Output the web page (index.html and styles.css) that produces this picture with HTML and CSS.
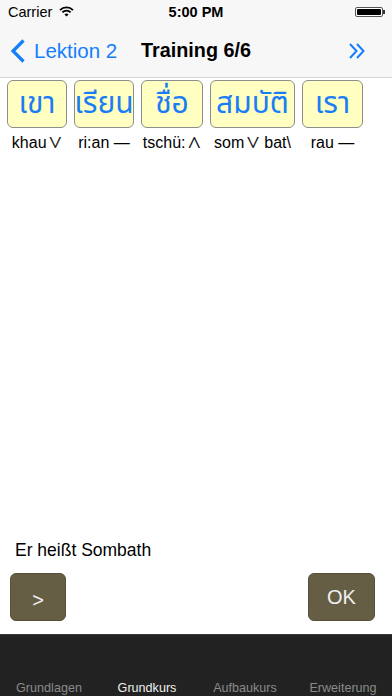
FILE: index.html
```html
<!DOCTYPE html>
<html>
<head>
<meta charset="utf-8">
<link rel="stylesheet" href="styles.css">
</head>
<body>
<div class="screen">
  <div class="statusbar">
    <div class="sb-left">
      <span>Carrier</span>
      <svg class="wifi" width="15" height="11" viewBox="0 0 15 11">
        <path d="M1 4.2 A9 9 0 0 1 14 4.2" fill="none" stroke="#000" stroke-width="1.8"/>
        <path d="M3.4 6.4 A5.6 5.6 0 0 1 11.6 6.4" fill="none" stroke="#000" stroke-width="1.8"/>
        <path d="M7.5 10.5 L5.5 8.4 A2.9 2.9 0 0 1 9.5 8.4 Z" fill="#000"/>
      </svg>
    </div>
    <div class="sb-time">5:00 PM</div>
    <div class="sb-right">
      <div class="battery"><div class="battery-fill"></div></div>
      <div class="battery-tip"></div>
    </div>
  </div>
  <div class="navbar">
    <div class="nav-back">
      <svg width="16" height="24" viewBox="0 0 16 24">
        <path d="M13.5 1.5 L3 12 L13.5 22.5" fill="none" stroke="#147efb" stroke-width="3.2"/>
      </svg>
      <span>Lektion 2</span>
    </div>
    <div class="nav-title">Training 6/6</div>
    <div class="nav-right">
      <svg width="18" height="16" viewBox="0 0 18 16">
        <path d="M2 1 L8.5 8 L2 15" fill="none" stroke="#147efb" stroke-width="2"/>
        <path d="M9 1 L15.5 8 L9 15" fill="none" stroke="#147efb" stroke-width="2"/>
      </svg>
    </div>
  </div>
  <div class="content">
    <div class="words">
      <div class="word"><div class="card w60">เขา</div><div class="trans">khau<span class="tone">∨</span></div></div>
      <div class="word"><div class="card w60">เรียน</div><div class="trans">ri:an —</div></div>
      <div class="word"><div class="card w62">ชื่อ</div><div class="trans">tschü:<span class="tone">∧</span></div></div>
      <div class="word"><div class="card w85">สมบัติ</div><div class="trans">som<span class="tone">∨</span> bat\</div></div>
      <div class="word"><div class="card w61">เรา</div><div class="trans">rau —</div></div>
    </div>
    <div class="spacer"></div>
    <div class="sentence">Er heißt Sombath</div>
    <div class="buttons">
      <div class="btn btn-next">&gt;</div>
      <div class="btn btn-ok">OK</div>
    </div>
  </div>
  <div class="tabbar">
    <span class="tab">Grundlagen</span>
    <span class="tab active">Grundkurs</span>
    <span class="tab">Aufbaukurs</span>
    <span class="tab">Erweiterung</span>
  </div>
</div>
</body>
</html>
```
FILE: styles.css
```css
* { box-sizing: border-box; }
html, body { margin: 0; padding: 0; }
body {
  font-family: "Liberation Sans", Arial, sans-serif;
  background: #fff;
  width: 392px;
  height: 696px;
  overflow: hidden;
}
.screen {
  display: flex;
  flex-direction: column;
  height: 696px;
}
.statusbar {
  height: 24px;
  background: #f7f7f7;
  display: flex;
  align-items: center;
  justify-content: space-between;
  padding: 0 7px 0 8px;
  font-size: 14.5px;
  color: #000;
  position: relative;
}
.sb-left { display: flex; align-items: center; gap: 7px; }
.wifi { margin-top: -1px; }
.sb-time {
  position: absolute;
  left: 0; right: 0;
  text-align: center;
  font-weight: bold;
  pointer-events: none;
}
.sb-right { display: flex; align-items: center; }
.battery {
  width: 28px;
  height: 10px;
  border: 1px solid #555;
  border-radius: 2px;
  padding: 1px;
  background: #fff;
}
.battery-fill { width: 100%; height: 100%; background: #000; border-radius: 1px; }
.battery-tip { width: 2px; height: 4px; background: #333; }
.navbar {
  height: 54px;
  background: #f7f7f7;
  border-bottom: 1px solid #d6d6d6;
  display: flex;
  align-items: center;
  position: relative;
  padding: 0 26px 0 10px;
  justify-content: space-between;
}
.nav-back {
  display: flex;
  align-items: center;
  gap: 8px;
  color: #147efb;
  font-size: 20.5px;
}
.nav-title {
  position: absolute;
  left: 0; right: 0;
  text-align: center;
  font-weight: bold;
  font-size: 19.8px;
  color: #000;
  pointer-events: none;
}
.nav-right { display: flex; align-items: center; }
.content {
  flex: 1;
  display: flex;
  flex-direction: column;
}
.words {
  display: flex;
  gap: 7px;
  padding: 2px 0 0 7px;
}
.word {
  display: flex;
  flex-direction: column;
  align-items: center;
}
.card {
  height: 48px;
  padding: 0;
  background: #ffffc2;
  border: 1px solid #8d8d8d;
  border-radius: 6px;
  color: #1a7df5;
  font-family: "Noto Sans Thai", "Thonburi", "Loma", "Garuda", "Noto Sans", "DejaVu Sans", sans-serif;
  font-size: 30px;
  display: flex;
  align-items: center;
  justify-content: center;
  line-height: 1;
  white-space: nowrap;
}
.w60 { width: 60px; }
.w61 { width: 61px; }
.w62 { width: 62px; }
.w85 { width: 85px; }
.trans {
  font-size: 16px;
  color: #000;
  margin-top: 6px;
  white-space: nowrap;
}
.tone {
  font-family: "Noto Sans Math", "Noto Sans Symbols", "Liberation Serif", "DejaVu Sans", sans-serif;
  font-weight: 300;
  font-size: 19px;
  line-height: 16px;
  margin-left: 2px;
  color: #222;
}
.spacer { flex: 1; }
.sentence {
  font-size: 17.5px;
  color: #000;
  padding: 0 0 0 15px;
  margin-bottom: 12px;
}
.buttons {
  display: flex;
  justify-content: space-between;
  padding: 0 17px 0 10px;
  margin-bottom: 13px;
}
.btn {
  height: 48px;
  background: #665e44;
  border: 1px solid #57503a;
  border-radius: 6px;
  color: #f0f0f0;
  font-size: 20px;
  display: flex;
  align-items: center;
  justify-content: center;
}
.btn-next { width: 56px; padding-top: 6px; }
.btn-ok { width: 67px; }
.tabbar {
  height: 62px;
  background: #222222;
  border-top: 1px solid #3a3a3a;
  display: grid;
  grid-template-columns: repeat(4, 1fr);
  align-items: end;
  justify-items: center;
  padding: 0;
  font-size: 12.6px;
  line-height: 15px;
}
.tab { color: #8a8a8a; }
.tab.active { color: #f0f0f0; }
```
